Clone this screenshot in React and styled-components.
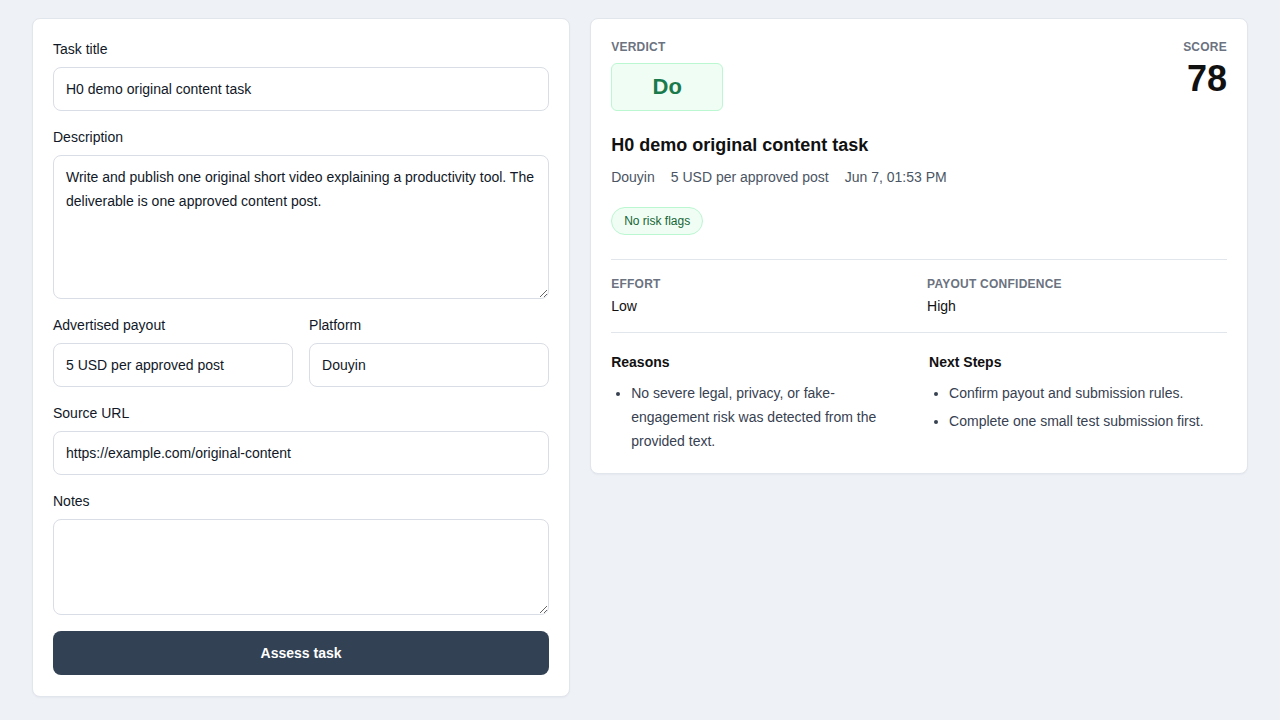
import { useState } from "react"
import styled, { createGlobalStyle } from "styled-components"

const GlobalStyle = createGlobalStyle`
  * { box-sizing: border-box; }
  body {
    margin: 0;
    background: #eef1f6;
    font-family: "Liberation Sans", Arial, sans-serif;
    color: #111827;
  }
`

const Page = styled.main`
  display: grid;
  grid-template-columns: 9fr 11fr;
  gap: 20px;
  align-items: start;
  padding: 18px 32px;
`

const Card = styled.section`
  background: #fff;
  border: 1px solid #e1e5ec;
  border-radius: 8px;
  box-shadow: 0 1px 2px rgba(15, 23, 42, 0.04);
  padding: ${(p) => (p.$form ? "22px 20px 21px" : "20px")};
`

const Form = styled.form`
  display: flex;
  flex-direction: column;
  gap: 18px;
`

const Field = styled.label`
  display: flex;
  flex-direction: column;
  gap: 10px;
  min-width: 0;
`

const LabelText = styled.span`
  font-size: 14px;
  line-height: 16px;
  color: #111827;
`

const Input = styled.input`
  height: 44px;
  border: 1px solid #d9dde5;
  border-radius: 8px;
  padding: 0 12px;
  font: inherit;
  font-size: 14px;
  color: #111827;
  background: #fff;
  outline: none;
  width: 100%;
`

const TextArea = styled.textarea`
  height: ${(p) => p.$h}px;
  border: 1px solid #d9dde5;
  border-radius: 8px;
  padding: 9px 12px;
  font: inherit;
  font-size: 14px;
  line-height: 24px;
  color: #111827;
  background: #fff;
  outline: none;
  width: 100%;
  resize: vertical;
`

const Row = styled.div`
  display: grid;
  grid-template-columns: 1fr 1fr;
  gap: 16px;
`

const Button = styled.button`
  height: 44px;
  border: 0;
  border-radius: 8px;
  background: #334155;
  color: #fff;
  font: inherit;
  font-size: 14px;
  font-weight: 700;
  cursor: pointer;
  margin-top: -2px;
`

const Header = styled.div`
  display: flex;
  justify-content: space-between;
  align-items: flex-start;
`

const Caps = styled.div`
  font-size: 12px;
  line-height: 16px;
  font-weight: 700;
  letter-spacing: 0.02em;
  text-transform: uppercase;
  color: #6b7280;
  text-align: ${(p) => (p.$right ? "right" : "left")};
`

const VerdictBox = styled.div`
  margin-top: 8px;
  width: 112px;
  height: 48px;
  display: flex;
  align-items: center;
  justify-content: center;
  background: #f0fdf4;
  border: 1px solid #bbf7d0;
  border-radius: 6px;
  color: #1a7a4c;
  font-size: 22px;
  font-weight: 700;
`

const Score = styled.div`
  margin-top: 4px;
  font-size: 36px;
  line-height: 40px;
  font-weight: 700;
  color: #111;
  text-align: right;
`

const Title = styled.h2`
  margin: 23px 0 0;
  font-size: 18px;
  line-height: 22px;
  font-weight: 700;
  color: #111;
`

const Meta = styled.div`
  margin-top: 12px;
  display: flex;
  gap: 16px;
  font-size: 14px;
  line-height: 18px;
  color: #4b5563;
`

const Pill = styled.span`
  display: inline-flex;
  align-items: center;
  margin-top: 21px;
  height: 28px;
  padding: 0 12px;
  border-radius: 999px;
  background: #f0fdf4;
  border: 1px solid #bbf7d0;
  color: #166534;
  font-size: 12px;
`

const Stats = styled.div`
  margin-top: 24px;
  display: grid;
  grid-template-columns: 1fr 1fr;
  gap: 16px;
  padding: 16px 0 17px;
  border-top: 1px solid #e1e5ec;
  border-bottom: 1px solid #e1e5ec;
`

const StatValue = styled.div`
  margin-top: 6px;
  font-size: 14px;
  line-height: 17px;
  color: #111;
`

const Lists = styled.div`
  margin-top: 21px;
  display: grid;
  grid-template-columns: 1fr 1fr;
  gap: 20px;
`

const ListTitle = styled.h3`
  margin: 0;
  font-size: 14px;
  line-height: 17px;
  font-weight: 700;
  color: #111;
`

const List = styled.ul`
  margin: 10px 0 0;
  padding-left: 20px;
  font-size: 14px;
  line-height: 24px;
  color: #374151;

  li {
    margin-bottom: 4px;
  }
  li:last-child {
    margin-bottom: 0;
  }
`

export default function App() {
  const [form, setForm] = useState({
    title: "H0 demo original content task",
    description:
      "Write and publish one original short video explaining a productivity tool. The deliverable is one approved content post.",
    payout: "5 USD per approved post",
    platform: "Douyin",
    url: "https://example.com/original-content",
    notes: "",
  })

  const set = (key) => (e) => setForm({ ...form, [key]: e.target.value })

  return (
    <>
      <GlobalStyle />
      <Page>
        <Card $form>
          <Form onSubmit={(e) => e.preventDefault()}>
            <Field>
              <LabelText>Task title</LabelText>
              <Input value={form.title} onChange={set("title")} />
            </Field>
            <Field>
              <LabelText>Description</LabelText>
              <TextArea $h={144} value={form.description} onChange={set("description")} />
            </Field>
            <Row>
              <Field>
                <LabelText>Advertised payout</LabelText>
                <Input value={form.payout} onChange={set("payout")} />
              </Field>
              <Field>
                <LabelText>Platform</LabelText>
                <Input value={form.platform} onChange={set("platform")} />
              </Field>
            </Row>
            <Field>
              <LabelText>Source URL</LabelText>
              <Input value={form.url} onChange={set("url")} />
            </Field>
            <Field>
              <LabelText>Notes</LabelText>
              <TextArea $h={96} value={form.notes} onChange={set("notes")} />
            </Field>
            <Button type="submit">Assess task</Button>
          </Form>
        </Card>

        <Card>
          <Header>
            <div>
              <Caps>Verdict</Caps>
              <VerdictBox>Do</VerdictBox>
            </div>
            <div>
              <Caps $right>Score</Caps>
              <Score>78</Score>
            </div>
          </Header>
          <Title>H0 demo original content task</Title>
          <Meta>
            <span>Douyin</span>
            <span>5 USD per approved post</span>
            <span>Jun 7, 01:53 PM</span>
          </Meta>
          <Pill>No risk flags</Pill>
          <Stats>
            <div>
              <Caps>Effort</Caps>
              <StatValue>Low</StatValue>
            </div>
            <div>
              <Caps>Payout confidence</Caps>
              <StatValue>High</StatValue>
            </div>
          </Stats>
          <Lists>
            <div>
              <ListTitle>Reasons</ListTitle>
              <List>
                <li>No severe legal, privacy, or fake-engagement risk was detected from the provided text.</li>
              </List>
            </div>
            <div>
              <ListTitle>Next Steps</ListTitle>
              <List>
                <li>Confirm payout and submission rules.</li>
                <li>Complete one small test submission first.</li>
              </List>
            </div>
          </Lists>
        </Card>
      </Page>
    </>
  )
}
